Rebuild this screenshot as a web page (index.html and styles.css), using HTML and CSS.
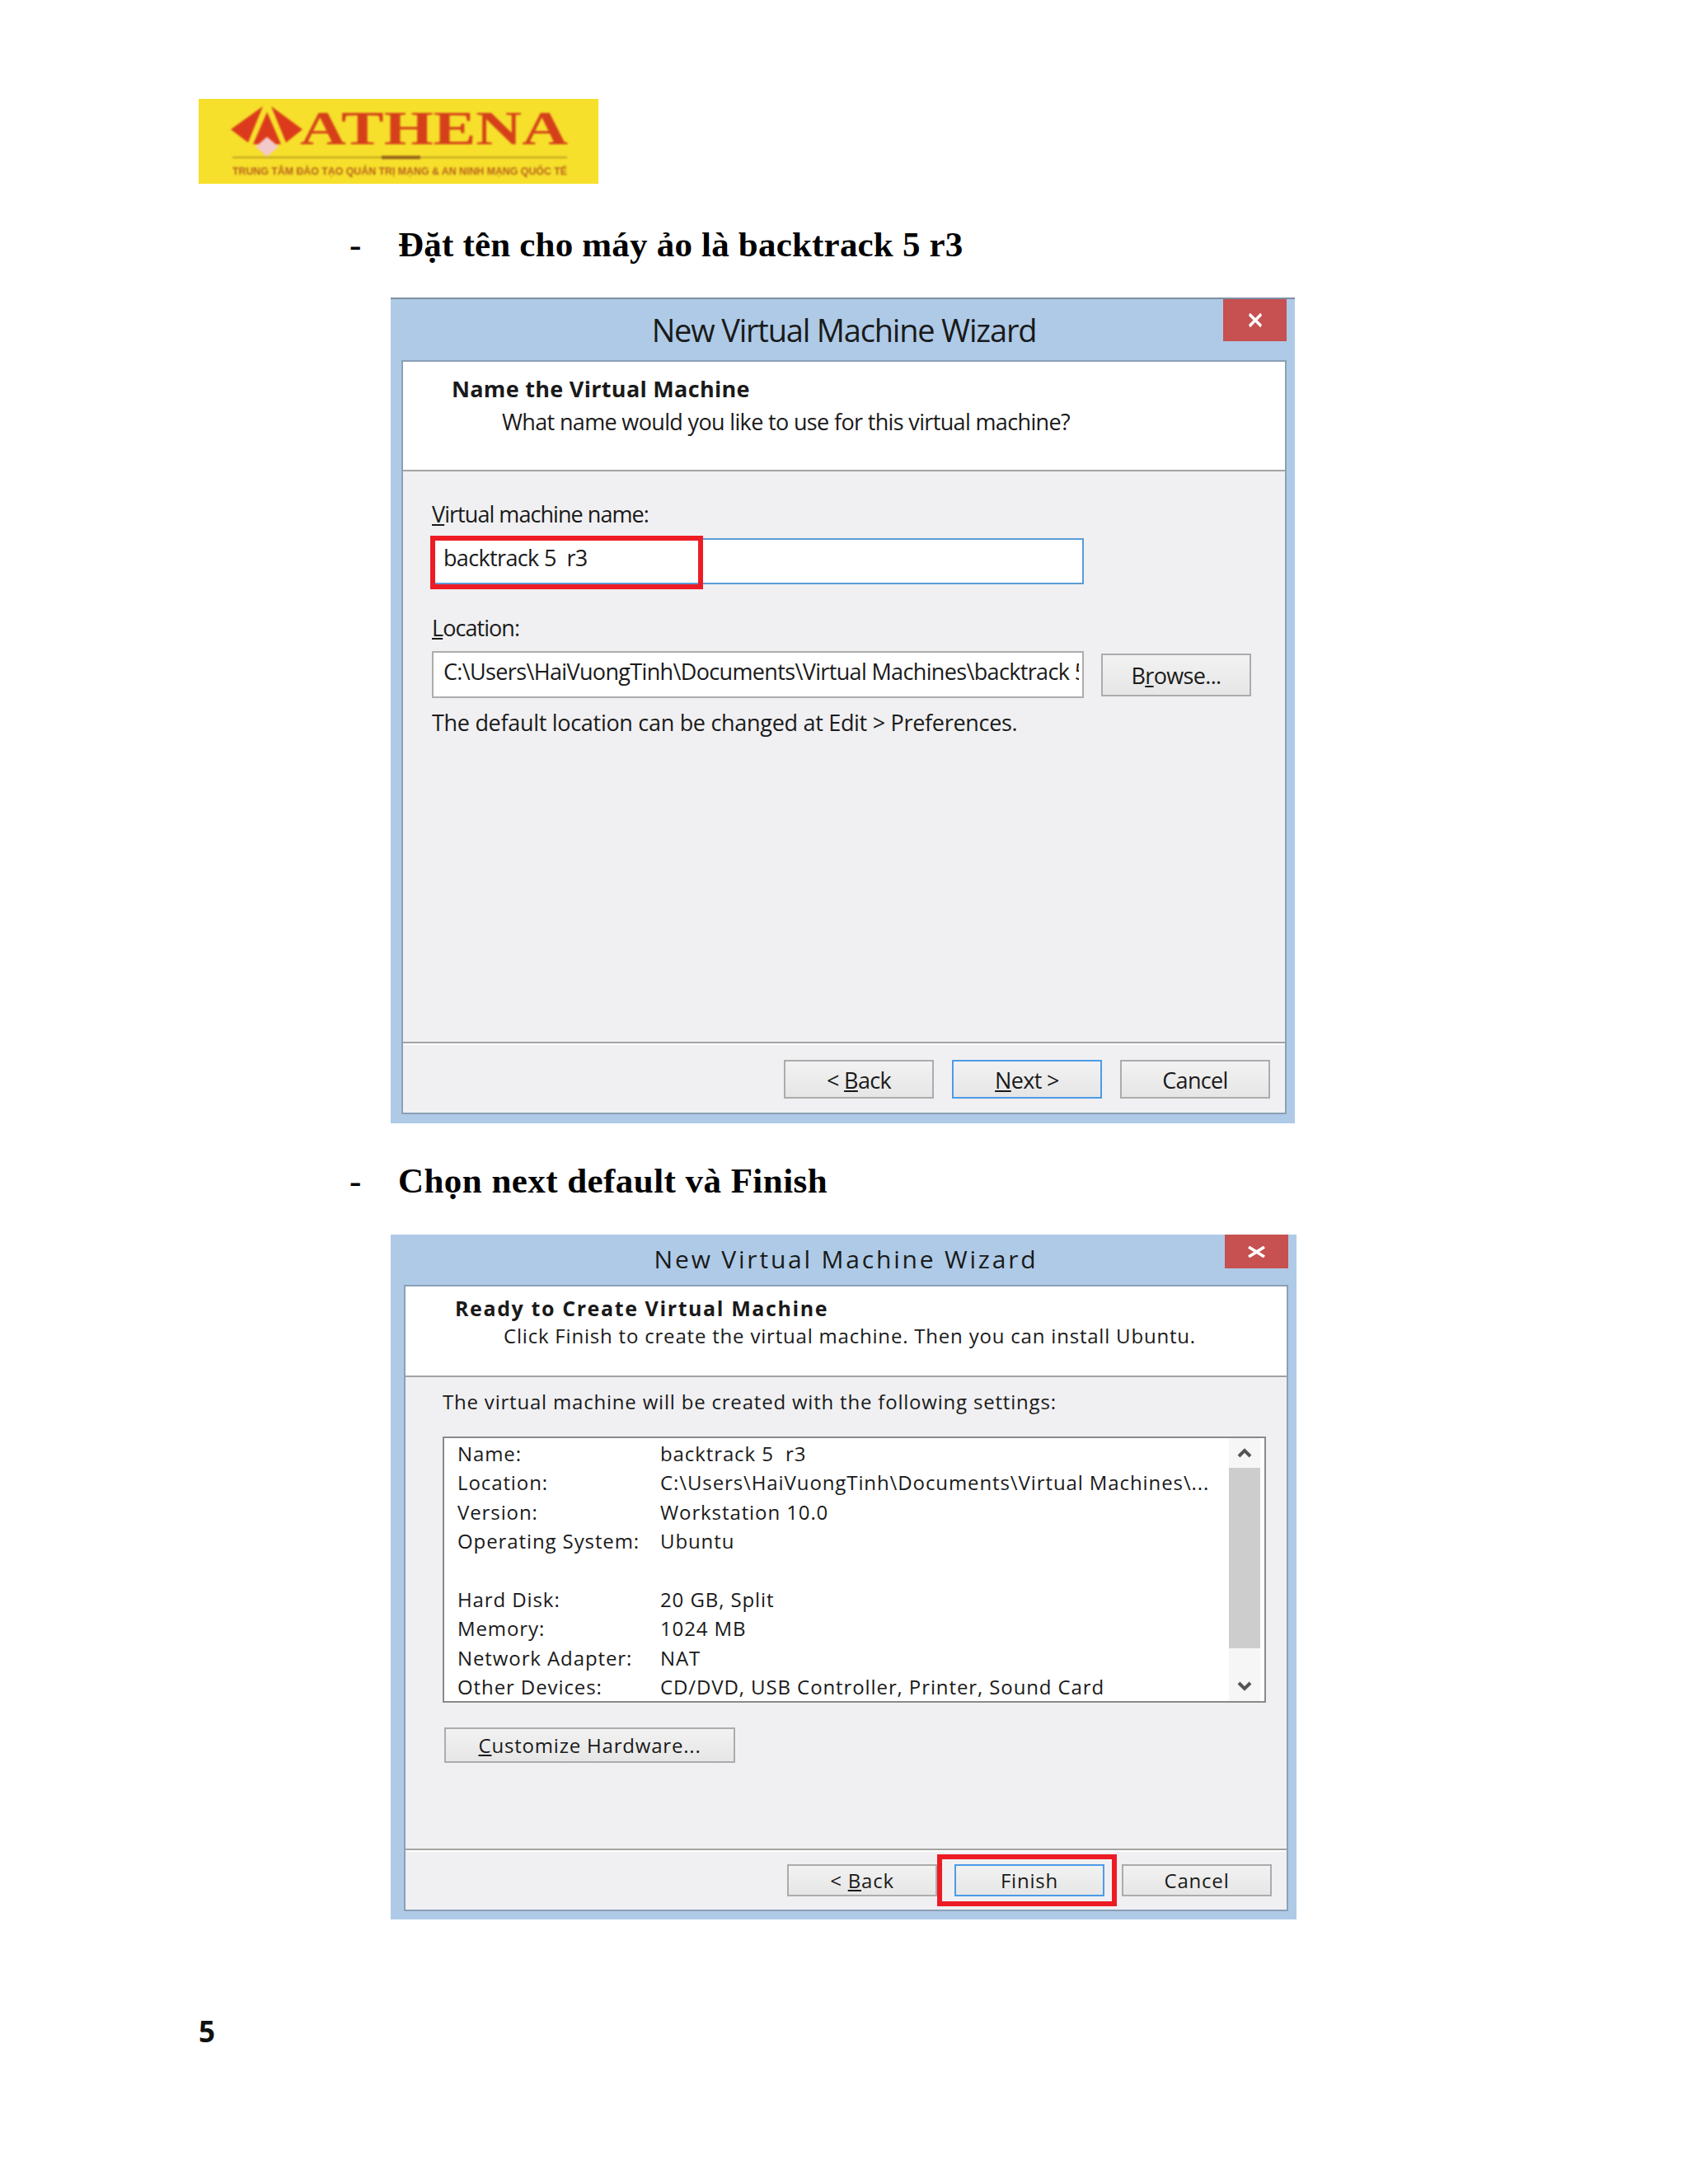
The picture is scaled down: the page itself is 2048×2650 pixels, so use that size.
FILE: index.html
```html
<!DOCTYPE html>
<html lang="vi">
<head>
  <meta charset="UTF-8" />
  <title>Athena - backtrack 5 r3</title>
  <link rel="stylesheet" href="styles.css">
</head>
<body>
  <div class="page">
    <svg class="logo" viewBox="0 0 485 103" width="485" height="103">
      <rect width="485" height="103" class="logo-bg" />
      <g class="logo-art">
        <polygon points="39,37 78,9 60,53" class="logo-red" />
        <polygon points="126,37 88,9 106,53" class="logo-red" />
        <polygon points="83,16 66,55 100,55" class="logo-red" />
        <polygon points="83,46 97,58 83,70 69,58" class="logo-pink" />
        <text x="123" y="55" class="logo-name" textLength="325" lengthAdjust="spacingAndGlyphs">ATHENA</text>
        <rect x="41" y="70" width="406" height="2" class="logo-line" />
        <rect x="222" y="69" width="47" height="4" class="logo-mark" />
        <text x="41" y="92" class="logo-tag" textLength="406" lengthAdjust="spacingAndGlyphs">TRUNG TÂM ĐÀO TẠO QUẢN TRỊ MẠNG &amp; AN NINH MẠNG QUỐC TẾ</text>
      </g>
    </svg>

    <h2 class="step step-one"><span class="dash">-</span><span>Đặt tên cho máy ảo là backtrack 5 r3</span></h2>

    <section class="wizard wizard-name">
      <div class="titlebar">
        <span class="win-title">New Virtual Machine Wizard</span>
        <span class="close"><svg viewBox="0 0 20 14" preserveAspectRatio="none"><path d="M1 1 19 13M19 1 1 13" /></svg></span>
      </div>
      <div class="panel">
        <div class="panel-head">
          <div class="head-title">Name the Virtual Machine</div>
          <div class="head-sub">What name would you like to use for this virtual machine?</div>
        </div>
        <div class="panel-body">
          <label class="field-label"><u>V</u>irtual machine name:</label>
          <div class="input input-focus">
            backtrack 5&nbsp; r3
            <span class="mark mark-input"></span>
          </div>
          <label class="field-label label-location"><u>L</u>ocation:</label>
          <div class="location-row">
            <div class="input input-location"><span class="clip">C:\Users\HaiVuongTinh\Documents\Virtual Machines\backtrack 5 r3</span></div>
            <div class="btn btn-browse">B<u>r</u>owse...</div>
          </div>
          <p class="hint">The default location can be changed at Edit &gt; Preferences.</p>
        </div>
        <div class="panel-foot">
          <div class="btn">&lt; <u>B</u>ack</div>
          <div class="btn btn-default"><u>N</u>ext &gt;</div>
          <div class="btn">Cancel</div>
        </div>
      </div>
    </section>

    <h2 class="step step-two"><span class="dash">-</span><span>Chọn next default và Finish</span></h2>

    <section class="wizard wizard-ready">
      <div class="titlebar">
        <span class="win-title">New Virtual Machine Wizard</span>
        <span class="close"><svg viewBox="0 0 20 14" preserveAspectRatio="none"><path d="M1 1 19 13M19 1 1 13" /></svg></span>
      </div>
      <div class="panel">
        <div class="panel-head">
          <div class="head-title">Ready to Create Virtual Machine</div>
          <div class="head-sub">Click Finish to create the virtual machine. Then you can install Ubuntu.</div>
        </div>
        <div class="panel-body">
          <p class="intro">The virtual machine will be created with the following settings:</p>
          <div class="listbox">
            <dl class="settings">
              <dt>Name:</dt><dd>backtrack 5&nbsp; r3</dd>
              <dt>Location:</dt><dd>C:\Users\HaiVuongTinh\Documents\Virtual Machines\...</dd>
              <dt>Version:</dt><dd>Workstation 10.0</dd>
              <dt>Operating System:</dt><dd>Ubuntu</dd>
              <dt class="blank"></dt><dd class="blank"></dd>
              <dt>Hard Disk:</dt><dd>20 GB, Split</dd>
              <dt>Memory:</dt><dd>1024 MB</dd>
              <dt>Network Adapter:</dt><dd>NAT</dd>
              <dt>Other Devices:</dt><dd>CD/DVD, USB Controller, Printer, Sound Card</dd>
            </dl>
            <div class="scrollbar">
              <span class="arrow"><svg viewBox="0 0 18 12" width="18" height="12"><path d="M2 10 9 3 16 10" /></svg></span>
              <span class="thumb"></span>
              <span class="arrow arrow-down"><svg viewBox="0 0 18 12" width="18" height="12"><path d="M2 2 9 9 16 2" /></svg></span>
            </div>
          </div>
          <div class="btn btn-customize"><u>C</u>ustomize Hardware...</div>
        </div>
        <div class="panel-foot">
          <div class="btn">&lt; <u>B</u>ack</div>
          <div class="btn btn-default">Finish<span class="mark mark-finish"></span></div>
          <div class="btn">Cancel</div>
        </div>
      </div>
    </section>

    <div class="page-number">5</div>
  </div>
</body>
</html>
```

FILE: styles.css
```css
*, *::before, *::after {
  box-sizing: border-box;
}
body {
  margin: 0;
  background: #fff;
  color: #111;
}
.page {
  width: 2048px;
  height: 2650px;
  padding: 120px 0 0 241px;
  overflow: hidden;
}

/* logo */
.logo {
  display: block;
}
.logo-bg {
  fill: #f6e02b;
}
.logo-art {
  filter: blur(1.1px);
}
.logo-red {
  fill: #dc3a1c;
}
.logo-pink {
  fill: #f3c9c9;
}
.logo-name {
  font-family: "Liberation Serif", serif;
  font-weight: 700;
  font-size: 58px;
  fill: #d5401a;
}
.logo-line {
  fill: #c4a322;
}
.logo-mark {
  fill: #94601c;
}
.logo-tag {
  font-family: "Liberation Sans", sans-serif;
  font-weight: 700;
  font-size: 13px;
  fill: #b8621c;
}

/* document headings */
.step {
  display: flex;
  margin: 44px 0 34px 183px;
  font-family: "Liberation Serif", serif;
  font-size: 43px;
  line-height: 60px;
  font-weight: 700;
  color: #000;
  letter-spacing: 0.2px;
}
.dash {
  width: 59px;
}
.step-two {
  margin: 40px 0 35px 183px;
  letter-spacing: 0.45px;
}

/* wizard window */
.wizard {
  margin-left: 233px;
  display: flex;
  flex-direction: column;
  background: #aecae7;
  font-family: "Open Sans", sans-serif;
  color: #1a1a1a;
}
.wizard-name {
  width: 1097px;
  height: 1002px;
  padding: 0 10px 11px 13px;
  border-top: 2px solid #7d8fa3;
  font-size: 27px;
  letter-spacing: -0.65px;
}
.wizard-ready {
  width: 1099px;
  height: 831px;
  padding: 0 10px 10px 16px;
  font-size: 24px;
  letter-spacing: 0.8px;
}
.titlebar {
  position: relative;
  flex: none;
  display: flex;
  justify-content: center;
  align-items: flex-end;
}
.wizard-name .titlebar {
  height: 74px;
  padding-bottom: 7px;
  font-size: 38px;
  letter-spacing: -1.2px;
  line-height: 60px;
}
.wizard-ready .titlebar {
  height: 61px;
  padding-bottom: 6px;
  font-size: 30px;
  letter-spacing: 2.8px;
  line-height: 50px;
}
.close {
  position: absolute;
  top: 0;
  right: 0;
  display: flex;
  align-items: center;
  justify-content: center;
  background: #c75050;
}
.close svg {
  display: block;
}
.wizard-name .close {
  width: 77px;
  height: 51px;
}
.wizard-name .close svg {
  width: 16px;
  height: 17px;
}
.wizard-ready .close {
  width: 77px;
  height: 41px;
}
.wizard-ready .close svg {
  width: 21px;
  height: 14px;
}
.close path {
  fill: none;
  stroke: #fff;
  stroke-width: 3.5;
}
.panel {
  flex: 1;
  display: flex;
  flex-direction: column;
  background: #f0f0f2;
  border: 2px solid #8ba0b6;
}
.panel-head {
  flex: none;
  background: #fff;
  border-bottom: 2px solid #a3a3a3;
}
.wizard-name .panel-head {
  height: 133px;
  padding: 13px 0 0 59px;
  line-height: 40px;
}
.wizard-ready .panel-head {
  height: 110px;
  padding: 9px 0 0 60px;
  line-height: 34px;
}
.head-title {
  font-weight: 700;
}
.wizard-name .head-title {
  letter-spacing: 0.3px;
}
.wizard-ready .head-title {
  font-size: 25px;
  letter-spacing: 1.6px;
}
.wizard-name .head-sub {
  padding-left: 61px;
}
.wizard-ready .head-sub {
  padding-left: 59px;
}
.panel-body {
  flex: 1;
}
.wizard-name .panel-body {
  padding: 32px 0 0 35px;
  line-height: 40px;
}
.wizard-ready .panel-body {
  padding: 13px 0 0 45px;
  line-height: 34px;
}
.field-label {
  display: block;
  letter-spacing: -0.95px;
}
.label-location {
  margin-top: 33px;
}
.input {
  position: relative;
  background: #fff;
  width: 791px;
  padding-left: 12px;
  white-space: nowrap;
}
.input-focus {
  height: 56px;
  margin-top: 9px;
  border: 2px solid #5c9bd8;
  line-height: 44px;
}
.location-row {
  display: flex;
  align-items: center;
  gap: 21px;
  margin-top: 8px;
}
.input-location {
  flex: none;
  height: 57px;
  border: 2px solid #adadad;
  padding-right: 4px;
  line-height: 46px;
}
.clip {
  display: block;
  overflow: hidden;
}
.hint {
  margin: 10px 0 0;
  letter-spacing: -0.3px;
}
.mark {
  position: absolute;
  border: 6px solid #ed1c24;
}
.mark-input {
  left: -4px;
  top: -5px;
  width: 331px;
  height: 65px;
}
.mark-finish {
  left: -23px;
  top: -14px;
  width: 218px;
  height: 63px;
}

/* buttons */
.btn {
  position: relative;
  flex: none;
  display: flex;
  align-items: center;
  justify-content: center;
  white-space: pre;
  width: 182px;
  background: linear-gradient(#f2f2f2, #e6e6e6);
  border: 2px solid #acacac;
}
.wizard-name .btn {
  height: 47px;
  padding-top: 1px;
}
.wizard-ready .btn {
  height: 39px;
}
.btn-default {
  border-color: #4c9be8;
}
.wizard-name .btn-browse {
  height: 52px;
  padding-top: 3px;
}
.wizard-ready .btn-customize {
  width: 353px;
  height: 43px;
  margin: 30px 0 0 2px;
}
.panel-foot {
  flex: none;
  display: flex;
  justify-content: flex-end;
  border-top: 2px solid #a3a3a3;
  box-shadow: inset 0 2px 0 #fff;
}
.wizard-name .panel-foot {
  height: 86px;
  gap: 22px;
  padding: 20px 18px 0 0;
}
.wizard-ready .panel-foot {
  height: 74px;
  gap: 21px;
  padding: 17px 18px 0 0;
}

/* settings list */
.intro {
  margin: 0 0 25px;
}
.listbox {
  display: flex;
  justify-content: space-between;
  width: 999px;
  height: 323px;
  background: #fff;
  border: 2px solid #8a8a8a;
  padding-right: 5px;
}
.settings {
  display: grid;
  grid-template-columns: 246px 1fr;
  grid-auto-rows: 35.4px;
  margin: 0;
  padding: 1px 0 0 16px;
  line-height: 35.4px;
  white-space: nowrap;
  letter-spacing: 0.9px;
}
.settings dd {
  margin: 0;
}
.scrollbar {
  width: 38px;
  display: flex;
  flex-direction: column;
  background: #f6f6f6;
}
.arrow {
  flex: none;
  height: 36px;
  display: flex;
  align-items: center;
  justify-content: center;
}
.arrow-down {
  margin-top: auto;
}
.arrow path {
  fill: none;
  stroke: #555;
  stroke-width: 4;
}
.thumb {
  height: 219px;
  background: #cdcdcd;
}

.page-number {
  margin-top: 112px;
  font-family: "Open Sans", sans-serif;
  font-weight: 700;
  font-size: 35px;
  line-height: 48px;
  color: #111;
}
```
